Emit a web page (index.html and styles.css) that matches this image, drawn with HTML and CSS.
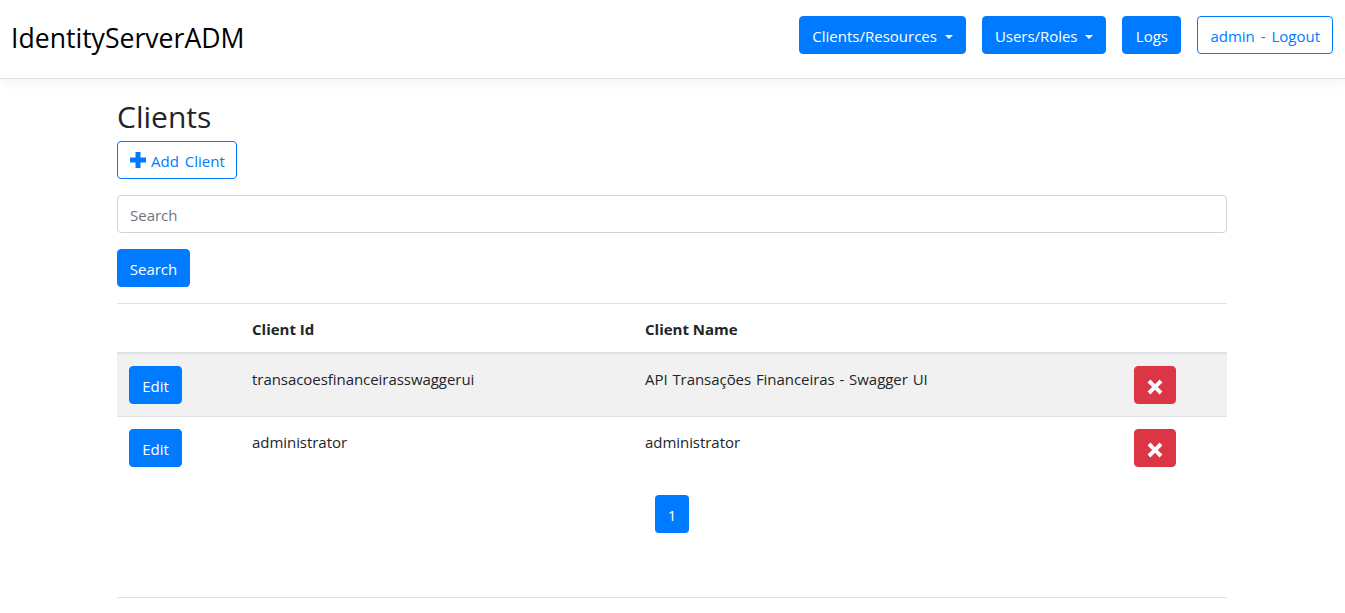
FILE: index.html
```html
<!DOCTYPE html>
<html lang="en">
<head>
  <meta charset="UTF-8">
  <meta name="viewport" content="width=device-width, initial-scale=1.0">
  <title>IdentityServerADM</title>
  <link rel="stylesheet" href="styles.css">
</head>
<body>
  <nav class="navbar">
    <a class="brand" href="#">IdentityServerADM</a>
    <div class="nav-buttons">
      <a class="btn btn-primary dropdown-toggle" href="#">Clients/Resources</a>
      <a class="btn btn-primary dropdown-toggle btn-users" href="#">Users/Roles</a>
      <a class="btn btn-primary btn-logs" href="#">Logs</a>
      <a class="btn btn-outline" href="#">admin - Logout</a>
    </div>
  </nav>

  <main class="container">
    <h2 class="page-title">Clients</h2>
    <a class="btn btn-outline btn-add" href="#">
      <svg class="icon-plus" viewBox="0 0 16 16" aria-hidden="true"><path d="M5.5 0h5v5.5H16v5h-5.5V16h-5v-5.5H0v-5h5.5z"/></svg>
      Add Client
    </a>

    <form class="search-form">
      <input class="form-control" type="text" placeholder="Search">
      <button class="btn btn-primary btn-search" type="button">Search</button>
    </form>

    <hr class="divider">

    <table class="table">
      <thead>
        <tr>
          <th class="col-edit"></th>
          <th class="col-id">Client Id</th>
          <th class="col-name">Client Name</th>
          <th class="col-delete"></th>
        </tr>
      </thead>
      <tbody>
        <tr class="row-striped">
          <td><a class="btn btn-primary btn-edit" href="#">Edit</a></td>
          <td>transacoesfinanceirasswaggerui</td>
          <td>API Transações Financeiras - Swagger UI</td>
          <td>
            <a class="btn btn-danger" href="#">
              <svg class="icon-times" viewBox="0 0 16 16" aria-hidden="true"><path d="M3.4 .6L8 5.2 12.6 .6l2.8 2.8L10.8 8l4.6 4.6-2.8 2.8L8 10.8l-4.6 4.6-2.8-2.8L5.2 8 .6 3.4z"/></svg>
            </a>
          </td>
        </tr>
        <tr>
          <td><a class="btn btn-primary btn-edit" href="#">Edit</a></td>
          <td>administrator</td>
          <td>administrator</td>
          <td>
            <a class="btn btn-danger" href="#">
              <svg class="icon-times" viewBox="0 0 16 16" aria-hidden="true"><path d="M3.4 .6L8 5.2 12.6 .6l2.8 2.8L10.8 8l4.6 4.6-2.8 2.8L8 10.8l-4.6 4.6-2.8-2.8L5.2 8 .6 3.4z"/></svg>
            </a>
          </td>
        </tr>
      </tbody>
    </table>

    <div class="pagination">
      <a class="page-link" href="#">1</a>
    </div>

    <hr class="divider footer-line">
  </main>
</body>
</html>
```

FILE: styles.css
```css
* {
  box-sizing: border-box;
}
body {
  margin: 0;
  font-family: "Open Sans", "Noto Sans", sans-serif;
  font-size: 15px;
  line-height: 26px;
  color: #212529;
  background: #fff;
}
a {
  text-decoration: none;
}
.navbar {
  display: flex;
  justify-content: space-between;
  align-items: flex-start;
  height: 79px;
  padding: 16px 12px 0;
  background: #fff;
  border-bottom: 1px solid #dee2e6;
  box-shadow: 0 4px 12px rgba(0, 0, 0, 0.05);
}
.brand {
  margin-left: -1px;
  font-size: 26.6px;
  line-height: 44px;
  color: #000;
}
.nav-buttons {
  display: flex;
  gap: 16px;
}
.btn {
  display: inline-block;
  height: 38px;
  padding: 6px 12px 4px;
  font: inherit;
  border: 1px solid transparent;
  border-radius: 4px;
  cursor: pointer;
}
.btn-primary {
  background: #007bff;
  border-color: #007bff;
  color: #fff;
}
.btn-outline {
  background: #fff;
  border-color: #007bff;
  color: #007bff;
  word-spacing: 2px;
}
.btn-danger {
  background: #dc3545;
  border-color: #dc3545;
  color: #fff;
  display: flex;
  width: 42px;
  align-items: center;
  justify-content: center;
  padding: 3px 0 0;
}
.btn-users {
  letter-spacing: -0.04px;
}
.btn-logs {
  min-width: 59px;
  text-align: center;
}
.btn-search {
  width: 73px;
  padding-left: 0;
  padding-right: 0;
  text-align: center;
}
.btn-edit {
  width: 53px;
  padding-left: 0;
  padding-right: 0;
  text-align: center;
}
.dropdown-toggle::after {
  content: "";
  display: inline-block;
  margin-left: 8px;
  vertical-align: 3px;
  border-top: 4.5px solid #fff;
  border-left: 4.5px solid transparent;
  border-right: 4.5px solid transparent;
}
.container {
  width: 1110px;
  margin-left: 117px;
}
.page-title {
  margin: 0;
  padding: 14px 0 1px;
  font-size: 30px;
  font-weight: 400;
  line-height: 47px;
}
.btn-add {
  display: inline-flex;
  align-items: center;
  gap: 5px;
  padding-right: 11px;
  padding-top: 7px;
  padding-bottom: 5px;
}
.icon-plus {
  width: 16px;
  height: 16px;
  margin-top: -2px;
  fill: #007bff;
}
.icon-times {
  width: 16px;
  height: 16px;
  fill: #fff;
}
.search-form {
  margin-top: 16px;
}
.form-control {
  display: block;
  width: 100%;
  height: 38px;
  padding: 8px 12px 6px;
  margin-bottom: 16px;
  font: inherit;
  color: #495057;
  border: 1px solid #ced4da;
  border-radius: 4px;
  background: #fff;
}
.form-control::placeholder {
  color: #6c757d;
}
.divider {
  height: 1px;
  margin: 16px 0 0;
  border: 0;
  background: #dee2e6;
}
.table {
  width: 100%;
  table-layout: fixed;
  border-collapse: collapse;
  margin-bottom: 16px;
}
.table th,
.table td {
  padding: 12px;
  text-align: left;
  vertical-align: top;
}
.table th {
  padding-bottom: 10px;
  font-weight: 700;
  border-bottom: 2px solid #dee2e6;
}
.table td {
  letter-spacing: -0.05px;
  word-spacing: 1px;
}
.table tbody tr:first-child td {
  border-bottom: 1px solid #dee2e6;
}
.col-edit {
  width: 123px;
}
.col-id {
  width: 393px;
}
.col-name {
  width: 489px;
}
.row-striped {
  background: #f1f1f1;
}
.pagination {
  display: flex;
  justify-content: center;
}
.page-link {
  display: block;
  width: 34px;
  height: 38px;
  padding: 7px 0;
  text-align: center;
  color: #fff;
  background: #007bff;
  border-radius: 4px;
}
.footer-line {
  margin-top: 64px;
}
```
